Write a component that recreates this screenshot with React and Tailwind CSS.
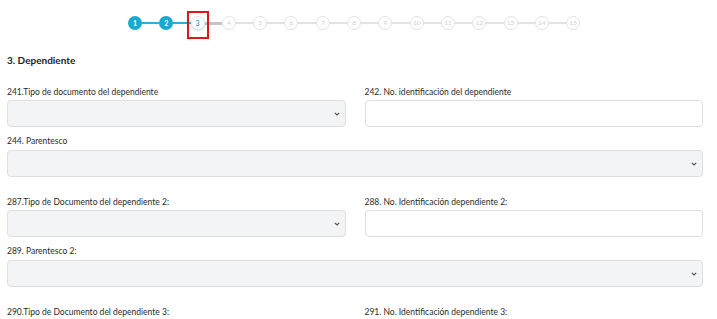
import React from 'react';

const steps = Array.from({ length: 15 }, (_, i) => i + 1);
const current = 3;

function Chevron() {
  return (
    <svg width="6" height="4" viewBox="0 0 6 4" className="text-[#555]">
      <path d="M0.8 0.8L3 3l2.2-2.2" fill="none" stroke="currentColor" strokeWidth="1.2" />
    </svg>
  );
}

function Stepper() {
  return (
    <div className="flex items-center pl-[128px] pt-[16px] h-[30px]">
      {steps.map((n) => {
        const done = n < current;
        const active = n === current;
        return (
          <React.Fragment key={n}>
            {n > 1 && (
              <div
                className={
                  n <= current
                    ? 'w-[17.3px] h-[2px] bg-[#27b3d6]'
                    : n === current + 1
                      ? 'w-[17.3px] h-[3px] bg-[#c4c4c4]'
                      : 'w-[17.3px] h-[2px] bg-[#e3e3e3]'
                }
              />
            )}
            <div className="relative">
              {done && (
                <div className="w-[14px] h-[14px] rounded-full bg-[#1aa9d1] text-white text-[7px] font-bold flex items-center justify-center">
                  {n}
                </div>
              )}
              {active && (
                <>
                  <div className="w-[14px] h-[14px] rounded-full bg-white border border-[#e4e4e4] shadow-[0_1px_2px_rgba(0,0,0,0.15)] text-[#27b3d6] text-[7px] font-bold flex items-center justify-center">
                    {n}
                  </div>
                  <div className="absolute -left-[4px] -top-[5px] w-[22px] h-[28px] border-2 border-[#e0141b]" />
                </>
              )}
              {!done && !active && (
                <div className="w-[14px] h-[14px] rounded-full bg-white border border-[#e2e2e2] text-[#cfcfcf] text-[6.5px] flex items-center justify-center">
                  {n}
                </div>
              )}
            </div>
          </React.Fragment>
        );
      })}
    </div>
  );
}

function Label({ children, wide }) {
  return (
    <div className={wide ? 'text-[8.5px] leading-[12px] text-[#2b2b2b] h-[12px] mb-[3px] mt-[1px]' : 'text-[8.5px] leading-[12px] text-[#2b2b2b] h-[12px] mb-[2px] mt-[1px]'}>
      {children}
    </div>
  );
}

function SelectBox() {
  return (
    <div className="h-[27px] rounded-[4px] border border-[#dcdfe3] bg-[#f3f4f6] flex items-center justify-end pr-[5px]">
      <Chevron />
    </div>
  );
}

function InputBox() {
  return <div className="h-[27px] rounded-[4px] border border-[#dcdfe3] bg-white" />;
}

export default function App() {
  return (
    <div className="w-[717px] h-[319px] overflow-hidden bg-white font-['Lato',sans-serif]">
      <Stepper />
      <div className="pl-[7px] pr-[14px]">
        <div className="mt-[23px] text-[10px] leading-[14px] font-bold text-[#222]">3. Dependiente</div>

        <div className="mt-[18px] grid grid-cols-2 gap-x-[19px]">
          <div>
            <Label>241.Tipo de documento del dependiente</Label>
            <SelectBox />
          </div>
          <div>
            <Label>242. No. identificación del dependiente</Label>
            <InputBox />
          </div>
        </div>

        <div className="mt-[8px]">
          <Label wide>244. Parentesco</Label>
          <SelectBox />
        </div>

        <div className="mt-[18px] grid grid-cols-2 gap-x-[19px]">
          <div>
            <Label>287.Tipo de Documento del dependiente 2:</Label>
            <SelectBox />
          </div>
          <div>
            <Label>288. No. Identificación dependiente 2:</Label>
            <InputBox />
          </div>
        </div>

        <div className="mt-[8px]">
          <Label wide>289. Parentesco 2:</Label>
          <SelectBox />
        </div>

        <div className="mt-[18px] grid grid-cols-2 gap-x-[19px]">
          <div>
            <Label>290.Tipo de Documento del dependiente 3:</Label>
            <SelectBox />
          </div>
          <div>
            <Label>291. No. Identificación dependiente 3:</Label>
            <InputBox />
          </div>
        </div>
      </div>
    </div>
  );
}
